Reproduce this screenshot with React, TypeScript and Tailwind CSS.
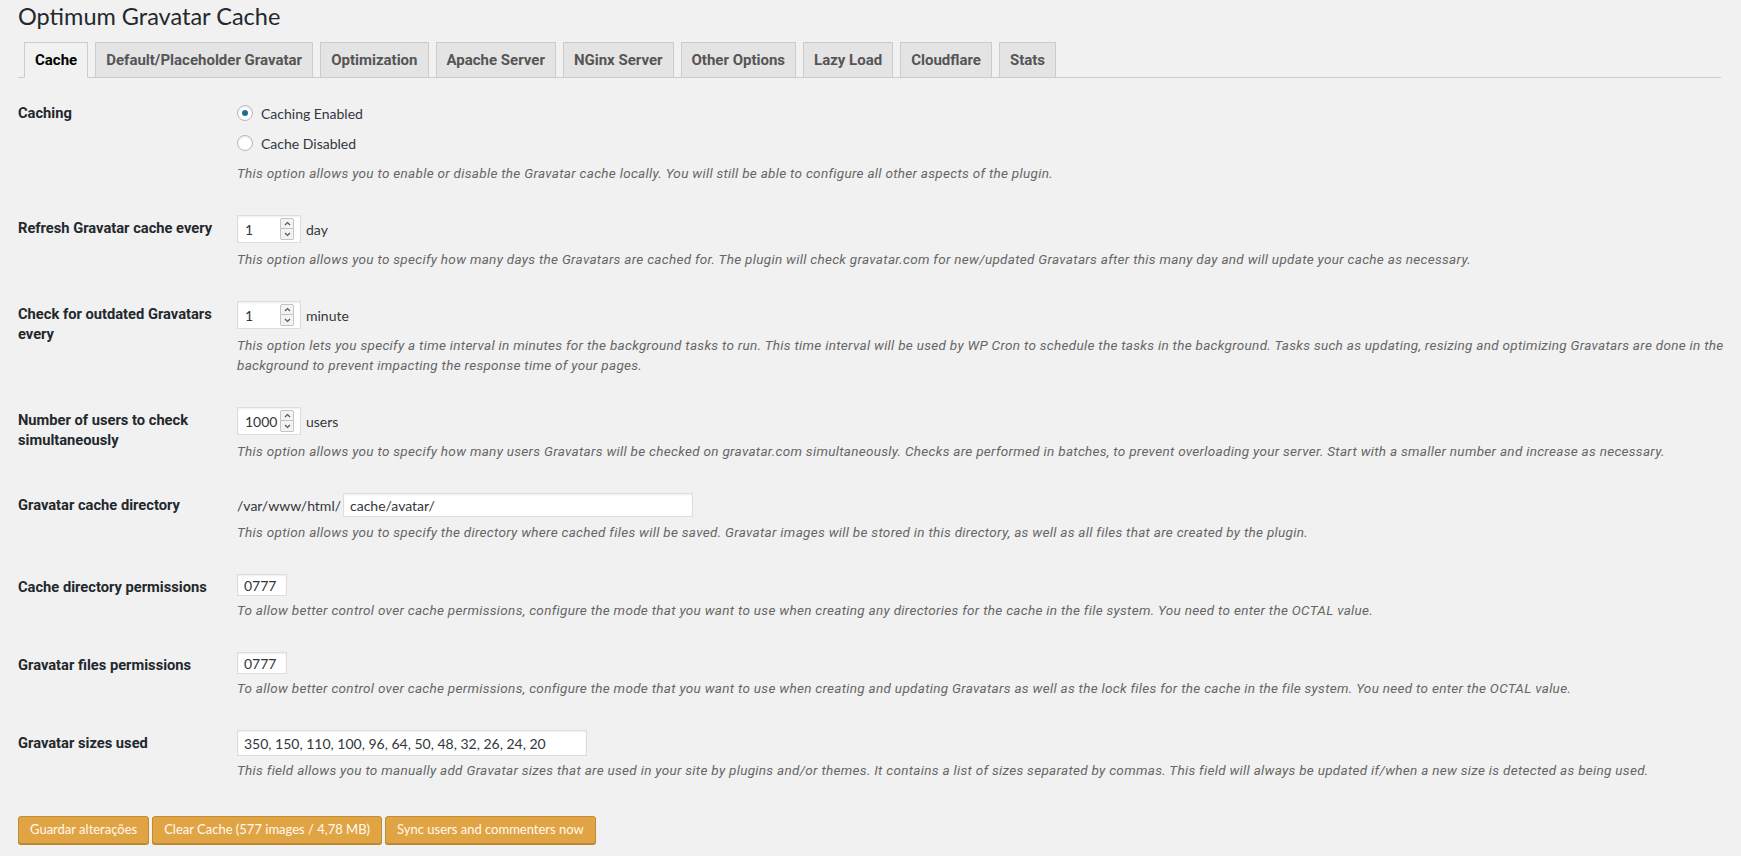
import type { ReactNode } from "react";

const tabs = [
  "Cache",
  "Default/Placeholder Gravatar",
  "Optimization",
  "Apache Server",
  "NGinx Server",
  "Other Options",
  "Lazy Load",
  "Cloudflare",
  "Stats",
];

function Chevron({ up }: { up?: boolean }) {
  return (
    <svg width="7" height="5" viewBox="0 0 7 5" className="block">
      <path
        d={up ? "M1 4 L3.5 1.5 L6 4" : "M1 1 L3.5 3.5 L6 1"}
        fill="none"
        stroke="#555"
        strokeWidth="1.2"
      />
    </svg>
  );
}

function NumberBox({ value, unit }: { value: string; unit: string }) {
  return (
    <div className="flex items-center gap-[5px]">
      <div className="flex h-[28px] w-[64px] items-center border border-[#dddddd] bg-white pl-[7px] shadow-[inset_0_1px_2px_rgba(0,0,0,0.07)]">
        <span className="flex-1 text-[14px] text-[#32373c]">{value}</span>
        <div className="mr-[6px] flex flex-col">
          <span className="flex h-[11px] w-[14px] items-center justify-center rounded-t-[2px] border border-[#c4c4c4] bg-[#f3f3f3]">
            <Chevron up />
          </span>
          <span className="flex h-[11px] w-[14px] items-center justify-center rounded-b-[2px] border border-t-0 border-[#c4c4c4] bg-[#f3f3f3]">
            <Chevron />
          </span>
        </div>
      </div>
      <span className="text-[14px] text-[#32373c]">{unit}</span>
    </div>
  );
}

function TextBox({ value, className }: { value: string; className: string }) {
  return (
    <input
      type="text"
      readOnly
      value={value}
      className={`border border-[#dddddd] bg-white px-[6px] text-[14px] text-[#32373c] shadow-[inset_0_1px_2px_rgba(0,0,0,0.07)] outline-none ${className}`}
    />
  );
}

function Radio({ checked, label }: { checked?: boolean; label: string }) {
  return (
    <label className="flex h-[20px] items-center gap-[8px] text-[14px] text-[#32373c]">
      <span className="flex h-[16px] w-[16px] items-center justify-center rounded-full border border-[#b4b9be] bg-white shadow-[inset_0_1px_2px_rgba(0,0,0,0.1)]">
        {checked && <span className="h-[6px] w-[6px] rounded-full bg-[#1e6f94]" />}
      </span>
      {label}
    </label>
  );
}

// descriptions and bold labels use Roboto: closer to the original's widths than Lato
function Desc({ children, className = "" }: { children: ReactNode; className?: string }) {
  return (
    <p
      className={`font-[Roboto,sans-serif] text-[13.5px] leading-[20px] tracking-[0.3px] italic text-[#666666] ${className}`}
    >
      {children}
    </p>
  );
}

function Row({
  label,
  labelClass = "pt-[3px]",
  children,
}: {
  label: ReactNode;
  labelClass?: string;
  children: ReactNode;
}) {
  return (
    <div className="grid grid-cols-[219px_1fr] py-4">
      <div
        className={`pr-2 font-[Roboto,sans-serif] text-[14.7px] leading-[20px] font-bold text-[#23282d] ${labelClass}`}
      >
        {label}
      </div>
      <div>{children}</div>
    </div>
  );
}

export default function App() {
  return (
    <div className="min-h-screen bg-[#f1f1f1] pr-[20px] pl-[18px] font-[Lato,sans-serif]">
      <h1 className="pt-[2px] text-[23.5px] leading-[29px] text-[#23282d]">
        Optimum Gravatar Cache
      </h1>

      <nav className="mt-[11px] flex h-[36px] border-b border-[#cccccc] pl-[6px]">
        {tabs.map((tab, i) => (
          <div
            key={tab}
            className={`-mb-px ml-[7px] flex h-[36px] items-center border px-[10px] font-[Roboto,sans-serif] text-[15px] font-bold first:ml-0 ${
              i === 0
                ? "border-[#cccccc] border-b-[#f1f1f1] bg-[#f1f1f1] text-black"
                : "border-[#cccccc] bg-[#e4e4e4] text-[#555555]"
            }`}
          >
            {tab}
          </div>
        ))}
      </nav>

      <div className="pt-[9px]">
        <Row label="Caching" labelClass="pt-0">
          <div className="flex flex-col gap-[10px]">
            <Radio checked label="Caching Enabled" />
            <Radio label="Cache Disabled" />
          </div>
          <Desc className="mt-[10px]">
            This option allows you to enable or disable the Gravatar cache locally. You will still be
            able to configure all other aspects of the plugin.
          </Desc>
        </Row>

        <Row label="Refresh Gravatar cache every">
          <NumberBox value="1" unit="day" />
          <Desc className="mt-[6px]">
            This option allows you to specify how many days the Gravatars are cached for. The plugin
            will check gravatar.com for new/updated Gravatars after this many day and will update your
            cache as necessary.
          </Desc>
        </Row>

        <Row label="Check for outdated Gravatars every">
          <NumberBox value="1" unit="minute" />
          <Desc className="mt-[6px]">
            <span className="block whitespace-nowrap">
              This option lets you specify a time interval in minutes for the background tasks to run.
              This time interval will be used by WP Cron to schedule the tasks in the background. Tasks
              such as updating, resizing and optimizing Gravatars are done in the
            </span>
            <span className="block">
              background to prevent impacting the response time of your pages.
            </span>
          </Desc>
        </Row>

        <Row label="Number of users to check simultaneously">
          <NumberBox value="1000" unit="users" />
          <Desc className="mt-[6px]">
            This option allows you to specify how many users Gravatars will be checked on gravatar.com
            simultaneously. Checks are performed in batches, to prevent overloading your server. Start
            with a smaller number and increase as necessary.
          </Desc>
        </Row>

        <Row label="Gravatar cache directory" labelClass="pt-[2px]">
          <div className="flex items-center gap-[2px]">
            <span className="text-[14px] text-[#32373c]">/var/www/html/</span>
            <TextBox value="cache/avatar/" className="h-[24px] w-[350px]" />
          </div>
          <Desc className="mt-[5px]">
            This option allows you to specify the directory where cached files will be saved. Gravatar
            images will be stored in this directory, as well as all files that are created by the
            plugin.
          </Desc>
        </Row>

        <Row label="Cache directory permissions">
          <TextBox value="0777" className="block h-[22px] w-[50px]" />
          <Desc className="mt-[4px]">
            To allow better control over cache permissions, configure the mode that you want to use
            when creating any directories for the cache in the file system. You need to enter the OCTAL
            value.
          </Desc>
        </Row>

        <Row label="Gravatar files permissions">
          <TextBox value="0777" className="block h-[22px] w-[50px]" />
          <Desc className="mt-[4px]">
            To allow better control over cache permissions, configure the mode that you want to use
            when creating and updating Gravatars as well as the lock files for the cache in the file
            system. You need to enter the OCTAL value.
          </Desc>
        </Row>

        <Row label="Gravatar sizes used">
          <TextBox
            value="350, 150, 110, 100, 96, 64, 50, 48, 32, 26, 24, 20"
            className="block h-[26px] w-[350px]"
          />
          <Desc className="mt-[4px]">
            This field allows you to manually add Gravatar sizes that are used in your site by plugins
            and/or themes. It contains a list of sizes separated by commas. This field will always be
            updated if/when a new size is detected as being used.
          </Desc>
        </Row>
      </div>

      <div className="flex gap-[3px] pt-[20px] pb-[12px]">
        {["Guardar alterações", "Clear Cache (577 images / 4,78 MB)", "Sync users and commenters now"].map(
          (b) => (
            <button
              key={b}
              className="h-[28px] rounded-[3px] border border-[#c28c30] bg-[#e0a444] px-[11px] text-[13px] text-[#fffaf0] shadow-[0_1px_0_#b88530]"
            >
              {b}
            </button>
          )
        )}
      </div>
    </div>
  );
}
